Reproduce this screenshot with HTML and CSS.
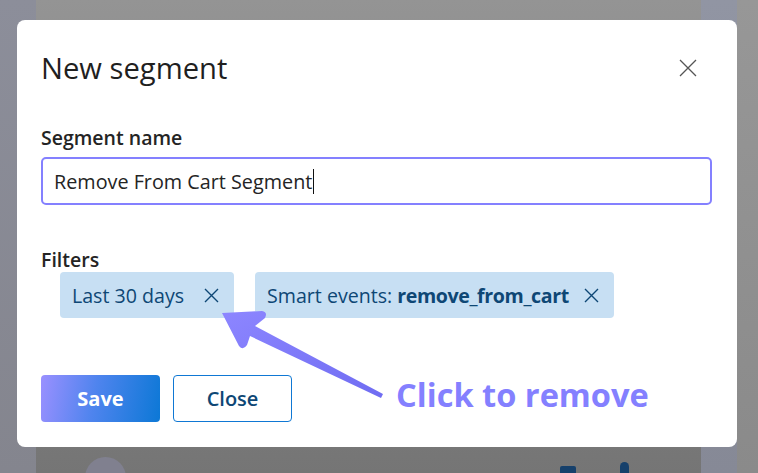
FILE: index.html
```html
<!DOCTYPE html>
<html lang="en">
<head>
	<meta charset="UTF-8">
	<meta name="viewport" content="width=device-width, initial-scale=1.0">
	<title>New segment</title>
	<link rel="stylesheet" href="styles.css">
</head>
<body>
	<div class="backdrop">
		<div class="rail"></div>
		<div class="board">
			<div class="board-row">
				<span class="avatar"></span>
				<span class="board-icon one"></span>
				<span class="board-icon two"></span>
			</div>
		</div>
		<div class="side">
			<div class="side-card top"></div>
			<div class="side-card"><span class="dots">⠿</span></div>
		</div>
		<div class="edge"></div>
	</div>

	<main class="dialog">
		<header class="dialog-head">
			<h1>New segment</h1>
			<button class="icon-btn" aria-label="Close">
				<svg width="18" height="18" viewBox="0 0 18 18"><path d="M1 1L17 17M17 1L1 17" stroke="#555" stroke-width="1.3" fill="none"/></svg>
			</button>
		</header>

		<label class="field-label" for="name">Segment name</label>
		<div class="input">Remove From Cart Segment<span class="caret"></span></div>

		<p class="field-label filters">Filters</p>
		<div class="chips">
			<span class="chip">Last 30 days
				<svg width="15" height="15" viewBox="0 0 15 15"><path d="M1 1L14 14M14 1L1 14" stroke="#0e4775" stroke-width="1.4" fill="none"/></svg>
			</span>
			<span class="chip event">Smart events:&nbsp;<b>remove_from_cart</b>
				<svg width="15" height="15" viewBox="0 0 15 15"><path d="M1 1L14 14M14 1L1 14" stroke="#0e4775" stroke-width="1.4" fill="none"/></svg>
			</span>
		</div>

		<div class="actions">
			<button class="btn primary">Save</button>
			<button class="btn outline">Close</button>
		</div>
	</main>

	<!-- annotation drawn over the dialog -->
	<svg class="arrow" width="758" height="473" viewBox="0 0 758 473">
		<defs>
			<linearGradient id="ag" x1="0" y1="0" x2="1" y2="1">
				<stop offset="0" stop-color="#8d86ff"/>
				<stop offset="1" stop-color="#6f6cf2"/>
			</linearGradient>
		</defs>
		<path d="M222 313 L262 311 Q268 312 265 318 L255 326 L383 394 L381 398 L250 336 L247 345 Q243 351 239 346 Z" fill="url(#ag)"/>
	</svg>
	<div class="hint">Click to remove</div>
</body>
</html>
```

FILE: styles.css
```css
body {
  margin: 0;
  width: 758px;
  height: 473px;
  overflow: hidden;
  position: relative;
  font-family: "Open Sans", "Noto Sans", sans-serif;
  color: #242424;
}

.backdrop {
  display: flex;
  height: 473px;
  overflow: hidden;
}

.rail {
  width: 36px;
  background: linear-gradient(#8c8e9a, #84858e);
}

.board {
  width: 665px;
  background: linear-gradient(#949494, #757575);
  display: flex;
  flex-direction: column;
  justify-content: flex-end;
}

.board-row {
  height: 26px;
  overflow: hidden;
  display: flex;
  align-items: flex-start;
  padding-left: 49px;
}

.avatar {
  width: 41px;
  height: 41px;
  margin-top: 10px;
  border-radius: 50%;
  background: #80808f;
}

.board-icon {
  width: 16px;
  height: 14px;
  margin-top: 19px;
  background: #16406b;
  border-radius: 2px;
}

.board-icon.one {
  margin-left: 434px;
}

.board-icon.two {
  margin-left: 44px;
  width: 9px;
  margin-top: 15px;
  border-radius: 5px 5px 0 0;
}

.side {
  width: 36px;
  background: linear-gradient(#9195a3, #868996);
  display: flex;
  flex-direction: column;
  gap: 6px;
  padding-top: 183px;
}

.side-card {
  height: 50px;
  background: #8f9099;
  border-radius: 10px 0 0 10px;
}

.side-card.top {
  background: #8a8e9c;
}

.edge {
  flex: 1;
  background: linear-gradient(#979797, #8a8a8a);
}

.dots {
  display: block;
  padding: 12px 0 0 12px;
  color: #333;
  font-size: 16px;
}

.dialog {
  position: absolute;
  left: 17px;
  top: 20px;
  width: 720px;
  height: 427px;
  box-sizing: border-box;
  padding: 30px 24px 25px;
  background: #fff;
  border-radius: 8px;
}

.dialog-head {
  display: flex;
  align-items: center;
  justify-content: space-between;
  height: 36px;
}

h1 {
  margin: 0;
  font-size: 29.2px;
  font-weight: 400;
  line-height: 36px;
  color: #1f1f1f;
}

.icon-btn {
  border: 0;
  background: none;
  padding: 0;
  margin-right: 16px;
  display: flex;
}

.field-label {
  display: block;
  margin: 40px 0 0;
  font-size: 19.5px;
  font-weight: 600;
  line-height: 24px;
}

.input {
  margin-top: 7px;
  width: 671px;
  height: 48px;
  box-sizing: border-box;
  border: 2px solid #8480ff;
  border-radius: 5px;
  padding: 0 11px;
  display: flex;
  align-items: center;
  font-size: 19.8px;
}

.caret {
  width: 1px;
  height: 25px;
  background: #111;
  margin-left: 1px;
}

.filters {
  margin-top: 43px;
}

.chips {
  display: flex;
  gap: 21px;
  margin-left: 19px;
}

.chip {
  display: flex;
  align-items: center;
  height: 46px;
  padding: 0 15px 0 12px;
  background: #c7dff3;
  border-radius: 4px;
  color: #0e4775;
  font-size: 19.6px;
}

.chip svg {
  margin-left: 20px;
}

.chip b {
  font-weight: 700;
  letter-spacing: -0.4px;
}

.event svg {
  margin-left: 15px;
}

.actions {
  display: flex;
  gap: 13px;
  margin-top: 57px;
}

.btn {
  width: 119px;
  height: 47px;
  border-radius: 4px;
  font-family: inherit;
  font-size: 20px;
  font-weight: 700;
}

.primary {
  border: 0;
  color: #fff;
  background: linear-gradient(100deg, #9a90ff, #4f84ee 45%, #0c78d6);
}

.outline {
  background: #fff;
  border: 1px solid #0f78d4;
  color: #0e4775;
  font-weight: 600;
}

.arrow {
  position: absolute;
  left: 0;
  top: 0;
}

.hint {
  position: absolute;
  left: 396px;
  top: 373px;
  color: #8480ff;
  font-size: 32.6px;
  font-weight: 700;
  line-height: 44px;
}
```
